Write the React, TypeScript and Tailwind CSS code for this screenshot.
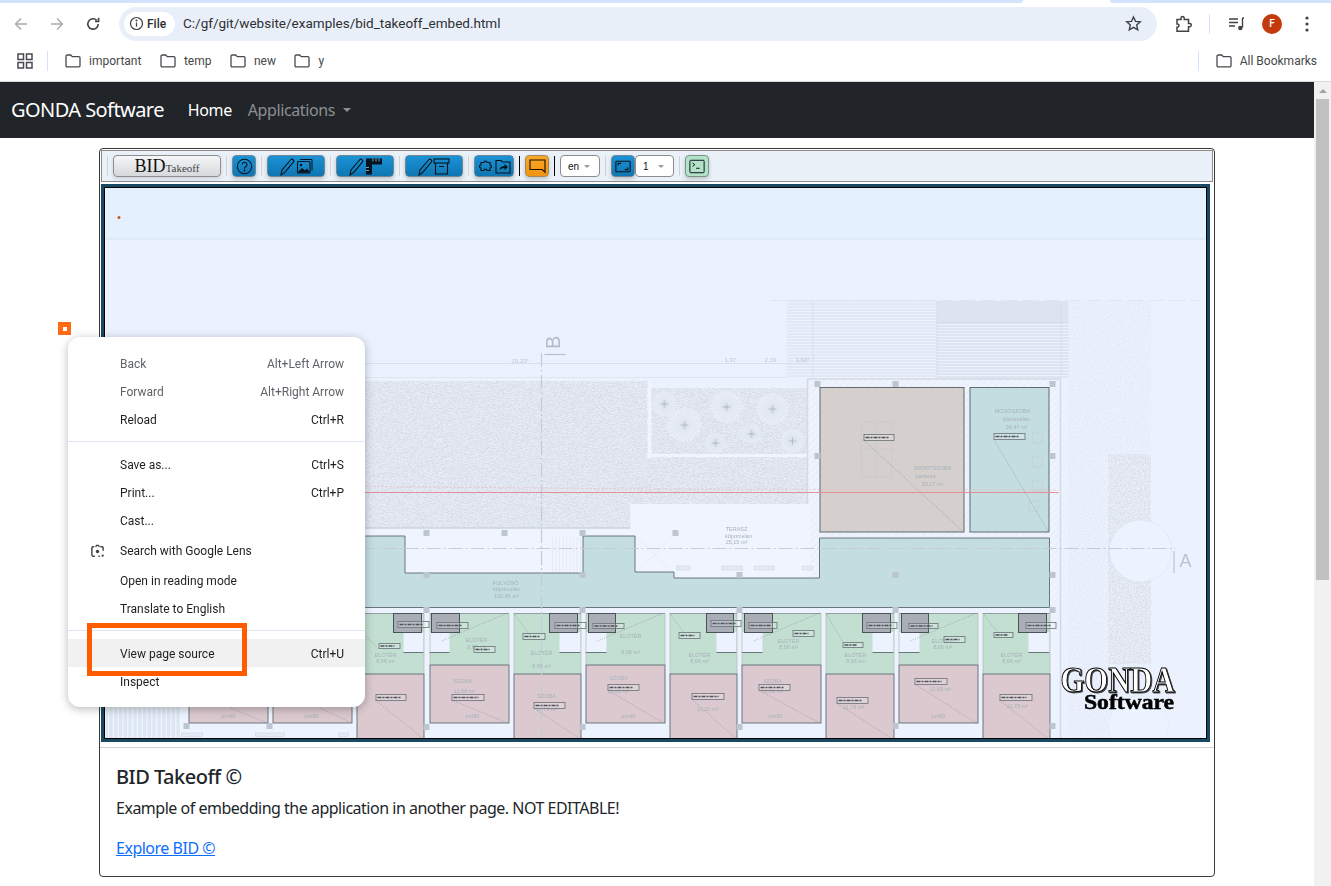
import React from "react";

const ui = { fontFamily: "Roboto, 'Liberation Sans', sans-serif" };

function Folder({ className = "" }: { className?: string }) {
  return (
    <svg viewBox="0 0 16 14" className={`w-[16px] h-[14px] ${className}`} fill="none" stroke="#474a4f" strokeWidth="1.3">
      <path d="M1 2.2c0-.6.5-1.2 1.1-1.2h3.6l1.6 1.7h6.6c.6 0 1.1.5 1.1 1.1v8c0 .6-.5 1.1-1.1 1.1H2.1c-.6 0-1.1-.5-1.1-1.1z" />
    </svg>
  );
}

function Bookmark({ label }: { label: string }) {
  return (
    <div className="flex items-center gap-[8px]">
      <Folder />
      <span className="text-[12px] text-[#474747]">{label}</span>
    </div>
  );
}

function ChromeBars() {
  return (
    <div className="bg-white border-b border-[#d8d8d8] h-[82px] flex flex-col shrink-0" style={ui}>
      <div className="h-[3px] bg-[#d3e3fd] flex">
        <div className="w-[1022px]" />
        <div className="w-[89px] bg-white rounded-t-[6px]" />
      </div>
      <div className="h-[41px] flex items-center">
        <svg viewBox="0 0 16 16" className="w-[16px] h-[16px] ml-[13px]" fill="none" stroke="#a8abaf" strokeWidth="1.5"><path d="M14 8H2.5M8 2.5 2.5 8 8 13.5" /></svg>
        <svg viewBox="0 0 16 16" className="w-[16px] h-[16px] ml-[20px]" fill="none" stroke="#a8abaf" strokeWidth="1.5"><path d="M2 8h11.5M8 2.5 13.5 8 8 13.5" /></svg>
        <svg viewBox="0 0 16 16" className="w-[16px] h-[16px] ml-[20px]" fill="none" stroke="#3f4347" strokeWidth="1.6"><path d="M13.2 8a5.2 5.2 0 1 1-1.5-3.7" /><path d="M13.6 1.8v3.6H10" /></svg>
        <div className="ml-[18px] w-[1038px] h-[34px] rounded-full bg-[#e9eff9] flex items-center pl-[5px] pr-[15px]">
          <div className="w-[51px] h-[24px] rounded-full bg-white flex items-center pl-[5px] gap-[3px]">
            <svg viewBox="0 0 16 16" className="w-[15px] h-[15px]" fill="none" stroke="#3c4043" strokeWidth="1.3"><circle cx="8" cy="8" r="6.4" /><path d="M8 7v4.4" /><circle cx="8" cy="4.8" r=".5" /></svg>
            <span className="text-[12px] font-medium text-[#2b2e31]">File</span>
          </div>
          <span className="ml-[8px] text-[13.5px] text-[#2e3033]">C:/gf/git/website/examples/bid_takeoff_embed.html</span>
          <svg viewBox="0 0 16 16" className="w-[17px] h-[17px] ml-auto" fill="none" stroke="#3f4347" strokeWidth="1.3"><path d="m8 1.8 1.9 4.2 4.5.4-3.4 3 1 4.5L8 11.6l-4 2.3 1-4.5-3.4-3 4.5-.4z" /></svg>
        </div>
        <svg viewBox="0 0 18 18" className="w-[18px] h-[18px] ml-[18px]" fill="none" stroke="#3f4347" strokeWidth="1.5"><path d="M2 4.5h4V3.2a1.6 1.6 0 0 1 3.2 0v1.3h4.3v4h1.2a1.6 1.6 0 0 1 0 3.2h-1.2v4.5H2v-4c2.6.4 2.6-3.6 0-3.2z" /></svg>
        <div className="w-px h-[20px] bg-[#d3e3fd] ml-[16px]" />
        <svg viewBox="0 0 18 18" className="w-[18px] h-[18px] ml-[17px]" fill="none" stroke="#3f4347" strokeWidth="1.4"><path d="M2 4h9M2 7.5h9M2 11h6M15.5 3v9.5" /><circle cx="13.3" cy="13" r="2.2" fill="#3f4347" stroke="none" /><path d="M15.5 3H17" /></svg>
        <div className="w-[20px] h-[20px] rounded-full bg-[#c33a0e] ml-[17px] flex items-center justify-center text-white text-[10px] font-medium">F</div>
        <svg viewBox="0 0 4 16" className="w-[4px] h-[16px] ml-[23px]" fill="#3f4347"><circle cx="2" cy="2" r="1.6" /><circle cx="2" cy="8" r="1.6" /><circle cx="2" cy="14" r="1.6" /></svg>
      </div>
      <div className="flex-1 flex items-center pb-[3px]">
        <svg viewBox="0 0 16 16" className="w-[16px] h-[16px] ml-[17px]" fill="none" stroke="#474a4f" strokeWidth="1.5"><rect x="1" y="1" width="5.5" height="5.5" /><rect x="9.5" y="1" width="5.5" height="5.5" /><rect x="1" y="9.5" width="5.5" height="5.5" /><rect x="9.5" y="9.5" width="5.5" height="5.5" /></svg>
        <div className="w-px h-[20px] bg-[#d3e3fd] ml-[14px] mr-[17px]" />
        <div className="flex gap-[18.5px]">
          <Bookmark label="important" />
          <Bookmark label="temp" />
          <Bookmark label="new" />
          <Bookmark label="y" />
        </div>
        <div className="w-px h-[20px] bg-[#d3e3fd] ml-auto mr-[17px]" />
        <div className="mr-[14px]"><Bookmark label="All Bookmarks" /></div>
      </div>
    </div>
  );
}

const btn = "h-[22px] rounded-[4px] border border-[#6f8797] bg-linear-to-b from-[#1b92d6] to-[#0e76b2] shadow-[0_2px_4px_rgba(0,0,0,0.2)] flex items-center justify-center";

function Sep({ dark }: { dark?: boolean }) {
  return <div className={dark ? "w-px h-[20px] bg-black" : "w-px h-[20px] bg-[#cfd3d8]"} />;
}

function Pencil() {
  return <path d="M2 19 3 14 12 3.5c1-1 3.5 1 2.5 2.3L5.6 16.7z" fill="none" stroke="#06121c" strokeWidth="1.1" />;
}

function Select({ label, w }: { label: string; w: string }) {
  return (
    <div className={`${w} h-[22px] rounded-[4px] border border-[#8c8c8c] bg-white flex items-center justify-between pl-[7px] pr-[9px] text-[10px] text-[#111]`} style={{ fontFamily: "'Liberation Sans', sans-serif" }}>
      <span>{label}</span>
      <span className="w-0 h-0 border-x-[3px] border-x-transparent border-t-[3px] border-t-[#999]" />
    </div>
  );
}

function Toolbar() {
  return (
    <div className="h-[32px] border border-[#8b8b8b] bg-[#ebf1f8] flex items-center gap-[5px] pl-[5px]">
      <Sep />
      <div className="w-[108px] h-[22px] rounded-[4px] border border-[#8e8e8e] bg-linear-to-b from-[#f5f6f8] to-[#d6d8db] flex items-baseline justify-center shadow-[0_2px_4px_rgba(0,0,0,0.12)] leading-[20px]" style={{ fontFamily: "'Liberation Serif', serif" }}>
        <span className="text-[18px] text-[#111]">BID</span>
        <span className="text-[11px] text-[#444]">Takeoff</span>
      </div>
      <Sep />
      <div className={`${btn} w-[24px]`}>
        <svg viewBox="0 0 18 18" className="w-[17px] h-[17px]" fill="none" stroke="#06121c" strokeWidth="1.1"><circle cx="9" cy="9" r="7.6" /><path d="M6.6 7a2.5 2.5 0 1 1 3.6 2.3c-.8.5-1.2 1-1.2 2" /><circle cx="9" cy="13.2" r=".5" /></svg>
      </div>
      <Sep />
      <div className={`${btn} w-[58px]`}>
        <svg viewBox="0 0 34 20" className="w-[34px] h-[20px]">
          <Pencil />
          <path d="M21 3.5h12v11" fill="none" stroke="#06121c" strokeWidth="1" />
          <rect x="18.5" y="5.500" width="12.500" height="11.500" rx="1" fill="none" stroke="#06121c" strokeWidth="1.1" />
          <path d="M18.500 16.500 23 12l3 2.500 2-2 3 4z" fill="#06121c" />
          <circle cx="22" cy="9" r="1.200" fill="#06121c" />
        </svg>
      </div>
      <Sep />
      <div className={`${btn} w-[58px]`}>
        <svg viewBox="0 0 34 20" className="w-[34px] h-[20px]">
          <Pencil />
          <path d="M18 2.500h16v6h-10v10h-6z" fill="#06121c" />
          <path d="M25 2.500v3M28 2.500v3M31 2.500v3M18 11.500h3M18 14.500h3" stroke="#8fc7ea" strokeWidth=".8" />
        </svg>
      </div>
      <Sep />
      <div className={`${btn} w-[58px]`}>
        <svg viewBox="0 0 34 20" className="w-[34px] h-[20px]" fill="none" stroke="#06121c" strokeWidth="1.1">
          <Pencil />
          <rect x="17" y="3" width="15" height="4" />
          <path d="M18.5 7v11h12V7M22 10.5h5" />
        </svg>
      </div>
      <Sep />
      <div className={`${btn} w-[40px]`}>
        <svg viewBox="0 0 34 18" className="w-[34px] h-[18px]" fill="none" stroke="#06121c" strokeWidth="1.1">
          <path d="M4 5.500h3a1.500 1.500 0 0 1 3 0h3v2.500a1.500 1.500 0 0 1 0 3v2.500h-3a1.500 1.500 0 0 0-3 0H4V11a1.500 1.500 0 0 1 0-3z" />
          <path d="M19 3.500h5l1.500 1.500H33v11H19z" />
          <path d="M22.500 13c.3-3 2.500-4 5-4V7l3.500 3-3.500 3v-2c-2 0-3.600.7-5 2z" fill="#06121c" stroke="none" />
        </svg>
      </div>
      <Sep dark />
      <div className="w-[24px] h-[22px] rounded-[4px] border border-[#a08a5e] bg-linear-to-b from-[#f9a825] to-[#f09410] shadow-[0_2px_4px_rgba(0,0,0,0.2)] flex items-center justify-center">
        <svg viewBox="0 0 18 16" className="w-[17px] h-[15px]" fill="none" stroke="#1a1206" strokeWidth="1.2"><path d="M1 1h16v13l-3-2.800H1z" /></svg>
      </div>
      <Sep dark />
      <Select label="en" w="w-[40px]" />
      <Sep />
      <div className="flex">
        <div className={`${btn} w-[24px]`}>
          <svg viewBox="0 0 18 14" className="w-[16px] h-[13px]" fill="none" stroke="#06121c" strokeWidth="1.2"><rect x="1" y="1" width="16" height="12" rx="1" /><path d="M3.500 6V3.500H7M14.500 8v2.500H11" /></svg>
        </div>
        <Select label="1" w="w-[39px]" />
      </div>
      <Sep />
      <div className="w-[24px] h-[22px] rounded-[4px] border border-[#7b9688] bg-[#b3e2c8] shadow-[0_2px_4px_rgba(0,0,0,0.2)] flex items-center justify-center">
        <svg viewBox="0 0 18 16" className="w-[16px] h-[15px]" fill="none" stroke="#06121c" strokeWidth="1.100"><rect x="1" y="1" width="16" height="14" rx="1" /><path d="m4 4 2.500 2L4 8M8 10h4" /></svg>
      </div>
    </div>
  );
}

type Box = [number, number, number, number];

const GREEN = "#c3dfd2";
const PINK = "#dbc9cf";
const units: { x0: number; x1: number; split: number; bottom: number; gap: [number, number] }[] = [
  { x0: 188, x1: 267, split: 664, bottom: 722, gap: [190, 210] },
  { x0: 272, x1: 351, split: 664, bottom: 722, gap: [330, 350] },
  { x0: 356, x1: 423, split: 673, bottom: 738, gap: [403, 423] },
  { x0: 429, x1: 508, split: 664, bottom: 722, gap: [429, 449] },
  { x0: 513, x1: 580, split: 673, bottom: 738, gap: [559, 580] },
  { x0: 585, x1: 664, split: 664, bottom: 722, gap: [585, 606] },
  { x0: 669, x1: 736, split: 673, bottom: 738, gap: [716, 736] },
  { x0: 741, x1: 820, split: 664, bottom: 722, gap: [741, 762] },
  { x0: 825, x1: 893, split: 673, bottom: 738, gap: [872, 893] },
  { x0: 898, x1: 977, split: 664, bottom: 722, gap: [898, 919] },
  { x0: 982, x1: 1049, split: 673, bottom: 738, gap: [1028, 1049] },
];

const wcs: [number, number][] = [[393, 421], [431, 459], [549, 577], [588, 615], [706, 733], [744, 772], [862, 890], [901, 928], [1018, 1046]];

const columns: [number, number][] = [
  [186, 725], [269, 725],
  [426, 532], [504, 532], [582, 532], [675, 532], [426, 574], [582, 574], [739, 574], [426, 609], [582, 609], [739, 609],
  [426, 726], [582, 726], [739, 726], [817, 383], [895, 383], [1052, 383], [817, 455], [1052, 455], [895, 574], [1052, 574],
  [895, 609], [1052, 609], [895, 725], [1052, 725],
];

const labels: Box[] = [
  [378, 642, 21, 5], [473, 645, 21, 6], [522, 632, 22, 6], [678, 631, 21, 6], [792, 629, 21, 6], [842, 641, 20, 5], [943, 635, 21, 6], [993, 631, 19, 5],
  [397, 620, 31, 6], [436, 621, 31, 6], [554, 621, 31, 6], [592, 622, 31, 5], [710, 619, 30, 6], [748, 621, 28, 6], [866, 621, 30, 6], [908, 622, 29, 5], [1025, 621, 30, 6],
  [375, 693, 30, 6], [451, 693, 32, 6], [533, 701, 31, 6], [607, 683, 31, 6], [691, 692, 32, 6], [758, 683, 31, 6], [836, 696, 31, 6], [914, 677, 32, 6], [999, 693, 32, 6],
  [863, 433, 30, 6], [993, 432, 31, 6],
];

const diagonals: Box[] = [
  [863, 439, 963, 531], [993, 438, 1048, 531], [451, 699, 507, 722], [607, 689, 663, 722], [758, 689, 819, 722], [914, 683, 976, 722],
  [375, 699, 423, 738], [533, 707, 580, 738], [691, 698, 736, 738], [836, 702, 892, 738], [999, 699, 1048, 738],
  [441, 640, 507, 612], [597, 640, 663, 612], [753, 640, 819, 612], [910, 640, 976, 612], [360, 630, 378, 648], [513, 612, 530, 635], [669, 612, 686, 635], [825, 612, 842, 640], [982, 612, 1000, 635],
  [230, 707, 267, 722], [320, 707, 351, 722],
];

const planText: [number, number, string][] = [
  [932, 469, "SPORTSZOBA"], [925, 477, "parketta"], [932, 485, "53,17 m²"],
  [1012, 412, "MOSÓSZOBA"], [1016, 420, "kőporcelán"], [1016, 428, "39,47 m²"],
  [505, 584, "FOLYOSÓ"], [506, 590, "kőporcelán"], [506, 597, "100,45 m²"],
  [736, 530, "TERASZ"], [738, 537, "kőporcelán"], [736, 543, "25,15 m²"],
  [385, 656, "ELŐTÉR"], [385, 662, "8,66 m²"], [476, 641, "ELŐTÉR"], [476, 648, "8,66 m²"], [541, 654, "ELŐTÉR"], [541, 667, "8,66 m²"],
  [630, 637, "ELŐTÉR"], [630, 653, "8,66 m²"], [699, 656, "ELŐTÉR"], [699, 662, "8,66 m²"], [788, 642, "ELŐTÉR"], [788, 648, "8,66 m²"],
  [855, 656, "ELŐTÉR"], [855, 662, "8,66 m²"], [942, 642, "ELŐTÉR"], [942, 648, "8,66 m²"], [1011, 656, "ELŐTÉR"], [1011, 662, "8,66 m²"],
  [462, 682, "SZOBA"], [464, 692, "11,68 m²"], [546, 697, "SZOBA"], [546, 710, "11,79 m²"], [618, 679, "SZOBA"], [618, 692, "11,68 m²"],
  [707, 710, "10,20 m²"], [772, 682, "SZOBA"], [772, 692, "11,68 m²"], [940, 690, "11,68 m²"], [853, 708, "11,79 m²"], [1017, 707, "11,79 m²"],
  [472, 717, "pm90"], [628, 717, "pm90"], [775, 717, "pm90"], [938, 717, "pm90"], [228, 717, "pm90"], [311, 717, "pm90"],
];

const trees: [number, number, number][] = [[664, 403, 12], [726, 406, 16], [772, 408, 16], [684, 424, 17], [715, 442, 10], [751, 433, 10], [792, 440, 12]];

function FloorPlan() {
  return (
    <svg viewBox="105 187 1100 550" className="w-full h-full block">
      <defs>
        <filter id="stipple" x="0" y="0" width="100%" height="100%" colorInterpolationFilters="sRGB">
          <feTurbulence type="fractalNoise" baseFrequency="0.8" numOctaves="2" seed="3" />
          <feColorMatrix type="matrix" values="0 0 0 0 0.5  0 0 0 0 0.56  0 0 0 0 0.66  5 0 0 0 -2.2" />
        </filter>
        <pattern id="hatch" width="5" height="5" patternUnits="userSpaceOnUse" patternTransform="rotate(-45)">
          <path d="M0 0H5" stroke="#d9e1ee" strokeWidth=".8" />
        </pattern>
      </defs>
      <rect x="105" y="187" width="1100" height="550" fill="#ebf2fe" />
      <rect x="105" y="187" width="1100" height="51" fill="#e4f0fe" />
      <path d="M105 238H1205" stroke="#d6e0ee" />
      <circle cx="118.500" cy="216.500" r="1.500" fill="#c8571b" />

      <g className="blur-[0.4px]">
        {/* ground */}
        <rect x="105" y="380" width="542" height="147" fill="#e7ecf5" />
        <rect x="105" y="380" width="542" height="147" filter="url(#stipple)" opacity=".18" />
        <rect x="647" y="453" width="165" height="50" fill="#e7ecf5" />
        <rect x="647" y="453" width="165" height="50" filter="url(#stipple)" opacity=".18" />
        <rect x="630" y="503" width="180" height="30" fill="#eff4fe" />
        <rect x="647" y="380" width="4" height="77" fill="#eff4fe" />
        <rect x="647" y="453" width="165" height="3" fill="#eff4fe" />
        <rect x="651" y="387" width="156" height="66" fill="#e7ecf5" />
        <rect x="651" y="387" width="156" height="66" filter="url(#stipple)" opacity=".18" />
        {trees.map(([x, y, r], i) => (
          <g key={i} stroke="#ccd4e0" strokeWidth=".3" fill="#e8edf6">
            <circle cx={x} cy={y} r={r} stroke="none" />
            {[0, 15, 30, 45, 60, 75, 90, 105, 120, 135, 150, 165].map((a) => (
              <path key={a} d={`M${x - r} ${y}H${x + r}`} transform={`rotate(${a} ${x} ${y})`} />
            ))}
            <path d={`M${x - 4} ${y}H${x + 4}M${x} ${y - 4}V${y + 4}`} stroke="#a8b2c0" strokeWidth=".7" />
          </g>
        ))}
        <rect x="1068" y="300" width="82" height="437" fill="#ebf1fd" />
        <rect x="1068" y="300" width="82" height="437" filter="url(#stipple)" opacity=".06" />
        <rect x="1108" y="453" width="42" height="210" fill="#e8edf6" />
        <rect x="1108" y="453" width="42" height="210" filter="url(#stipple)" opacity=".14" />
        <circle cx="1140" cy="550" r="31" fill="#ecf2fe" stroke="#d8dfea" strokeDasharray="1 1" />
        <circle cx="1138" cy="725" r="30" fill="#ecf2fe" stroke="#dfe6f1" strokeDasharray="1 1" />

        {/* striped deck */}
        <rect x="936" y="300" width="132" height="22" fill="#dde3ef" />
        <g stroke="#d2dae7" strokeWidth=".8">
          {Array.from({ length: 26 }, (_, i) => (
            <path key={i} d={`M786 ${300 + i * 3}H936`} />
          ))}
        </g>
        <g stroke="#c8d0de" strokeWidth=".8">
          {Array.from({ length: 19 }, (_, i) => (
            <path key={i} d={`M936 ${322 + i * 3}H1068`} />
          ))}
        </g>
        <path d="M812.500 300V376M936.500 300V376M1060.500 300V376" stroke="#d8dfeb" />
        <path d="M105 362.500H810" stroke="#d8e0ec" />
        <path d="M105 376.500H786" stroke="#dde5f0" />
        <path d="M770 299.500H1200" stroke="#e0e7f3" strokeDasharray="16 5" />
        <g fill="#a9b2bf" fontSize="6" fontFamily="'Liberation Sans', sans-serif" opacity=".7">
          <text x="511" y="362">19,33⁵</text>
          <text x="724" y="361">1,97</text>
          <text x="764" y="361">2,19</text>
          <text x="795" y="361">1,60⁵</text>
        </g>

        {/* building shell */}
        <rect x="807" y="378" width="253" height="360" fill="#eef3fe" />
        <rect x="807" y="378" width="253" height="360" fill="url(#hatch)" />
        <rect x="180" y="527" width="505" height="60" fill="#eff4fe" stroke="#ccd4df" strokeWidth="1.500" />
        <rect x="630" y="503" width="180" height="74" fill="#eff4fe" />
        <rect x="180" y="606" width="880" height="132" fill="#edf3fe" />
        <path d="M807 378H1060V738M807 378V503" fill="none" stroke="#d3dae5" strokeWidth="1.500" />
        <g stroke="#dce3ed" strokeWidth=".5">
          {Array.from({ length: 9 }, (_, i) => (
            <path key={i} d={`M${552 + i * 3.500} 536v35`} />
          ))}
          <path d="M638 537l32 33M670 537l-32 33" fill="none" />
        </g>
        <g fill="#e4eaf3" stroke="#cdd5df" strokeWidth=".6">
          {[[676, 565, 14], [721, 565, 21], [754, 565, 20], [802, 565, 10]].map(([x, y, w], i) => (
            <rect key={i} x={x} y={y} width={w} height="4" />
          ))}
        </g>
        {/* strip left of the rooms, under the menu and beneath it */}
        <rect x="105" y="606" width="75" height="131" fill="#dde7f3" />
        <g stroke="#f1f6fd" strokeWidth="1.200">
          {Array.from({ length: 16 }, (_, i) => (
            <path key={i} d={`M${108 + i * 4.800} 606V737`} />
          ))}
        </g>
        <g fill="#e4eaf3" stroke="#cdd5df" strokeWidth=".6">
          {[[181, 732, 21], [255, 732, 29], [338, 732, 10]].map(([x, y, w], i) => (
            <rect key={i} x={x} y={y} width={w} height="3.500" />
          ))}
        </g>

        {/* corridor */}
        <path d="M180 535H404.500V572H582.500V535H634.500V571H673.500V577H819V537H1049V606.500H180Z" fill="#c3dde1" stroke="#5f6a72" strokeWidth=".9" />
        <rect x="819.500" y="386.500" width="144" height="144.500" fill="#d5cfce" stroke="#5f6a72" />
        <rect x="969.500" y="386.500" width="79" height="144.500" fill="#c4dde0" stroke="#5f6a72" />
        <g stroke="#c0c6ce" strokeWidth=".5" fill="none">
          <path d="M861 421h30v55h-30zM876 421v55M859 448h36" />
          <path d="M1032 432h10v10h-10zM1032 456h10v10h-10zM1032 480h10v10h-10zM1028 500h10v10h-10z" />
        </g>

        {/* units */}
        {units.map((u) => (
          <g key={u.x0} stroke="#5f6a72" strokeWidth=".9">
            <rect x={u.x0 + 0.5} y={612.500} width={u.x1 - u.x0} height={u.split - 612.500} fill={GREEN} stroke="none" />
            <rect x={u.gap[0]} y={631} width={u.gap[1] - u.gap[0]} height={20} fill="#ecf2fe" stroke="none" />
            <path d={`M${u.x0 + 0.5} 612.500H${u.x1 + 0.5}`} stroke="#8a969a" />
            <rect x={u.x0 + 0.5} y={u.split} width={u.x1 - u.x0} height={u.bottom - u.split} fill={PINK} />
            <path d={`M${u.gap[0]} 651.500H${u.gap[1]}`} />
            <path d={`M${u.x0 + 0.5} 612.500V${u.split}M${u.x1 + 0.5} 612.500V${u.split}`} stroke="#a4b4ad" strokeWidth=".6" />
          </g>
        ))}
        {wcs.map(([a, b]) => (
          <rect key={a} x={a} y={612.500} width={b - a} height={19} fill="#a9adb5" stroke="#4c525a" />
        ))}
        {columns.map(([x, y], i) => (
          <rect key={i} x={x - 3} y={y - 3} width="6" height="6" fill="#bcc5d0" />
        ))}

        {/* dash lines */}
        <g fill="none" stroke="#c4ccd7" strokeWidth="1.200" strokeDasharray="14 3 2 3">
          <path d="M360 547.500H1175" />
          <path d="M541 352V738" />
        </g>
        <path d="M105 491.500H1058" stroke="#e58f98" strokeWidth="1.200" />
        <path d="M105 483 L640 488L1058 489" fill="none" stroke="#efb8bd" strokeWidth=".8" strokeDasharray="2 2" />
        <path d="M544 353.500H565" stroke="#b8bfca" strokeWidth="1.200" />
        <text x="559" y="348" fontSize="20" fill="#b5bcc7" fontFamily="'Liberation Sans', sans-serif" transform="rotate(-90 559 348)">B</text>
        <path d="M1173.500 550V572" stroke="#bcc3cd" strokeWidth="1.200" />
        <text x="1179" y="566" fontSize="18" fill="#bcc3cd" fontFamily="'Liberation Sans', sans-serif">A</text>

        <g stroke="#7d858d" strokeWidth=".5" strokeDasharray="1.200 1.200" fill="none">
          {diagonals.map(([a, b, c, d], i) => (
            <path key={i} d={`M${a} ${b}L${c} ${d}`} />
          ))}
        </g>
        <g fill="#a6b2b8" fontSize="5.500" fontFamily="'Liberation Sans', sans-serif" textAnchor="middle">
          {planText.map(([x, y, t], i) => (
            <text key={i} x={x} y={y}>{t}</text>
          ))}
        </g>
        {labels.map(([x, y, w, h], i) => (
          <g key={i}>
            <rect x={x + 0.5} y={y + 0.5} width={w} height={h} fill="#eef2f4" fillOpacity=".25" stroke="#6a7076" strokeWidth=".8" />
            <path d={`M${x + 2} ${y + h / 2 + 0.5}H${x + w - 5}`} stroke="#4e5359" strokeWidth="1.700" strokeDasharray="4 1 2 1" />
          </g>
        ))}
      </g>
      <text x="1117" y="691" textAnchor="middle" fontSize="35" fontWeight="700" fontFamily="'Liberation Serif', serif" fill="#fff" stroke="#000" strokeWidth="1" textLength="114" lengthAdjust="spacingAndGlyphs" className="drop-shadow-[1px_1px_0_rgba(0,0,0,0.7)]">GONDA</text>
      <text x="1128.500" y="708" textAnchor="middle" fontSize="20" fontWeight="700" fontFamily="'Liberation Serif', serif" fill="#000" stroke="#000" strokeWidth=".5" textLength="90" lengthAdjust="spacingAndGlyphs">Software</text>
    </svg>
  );
}

function MenuRow({ label, keys, dim, hover, lens, tall, low }: { label: string; keys?: string; dim?: boolean; hover?: boolean; lens?: boolean; tall?: boolean; low?: boolean }) {
  return (
    <div className={`flex items-center pl-[22px] pr-[21px] ${tall ? "h-[30px]" : "h-[28px]"} ${low ? "pt-[2px]" : ""} ${hover ? "bg-[#f1f1f1]" : ""}`}>
      <div className="w-[30px] shrink-0">
        {lens && (
          <svg viewBox="0 0 16 16" className="w-[15px] h-[15px]" fill="none" stroke="#3c4043" strokeWidth="1.500">
            <path d="M4.500 3H3.200C2.500 3 2 3.500 2 4.200v7.600c0 .7.500 1.200 1.200 1.200h2M10.500 13H9M11 3h1.800c.7 0 1.200.5 1.200 1.200v3M6 3l1-1.500h2L10 3" />
            <circle cx="8" cy="8" r="1.800" fill="#3c4043" stroke="none" />
            <circle cx="13.500" cy="12.500" r="1.200" fill="#3c4043" stroke="none" />
          </svg>
        )}
      </div>
      <span className={`text-[12px] ${dim ? "text-[#5f6368]" : "text-[#1f1f1f]"}`}>{label}</span>
      {keys && <span className={`ml-auto text-[12px] ${dim ? "text-[#5f6368]" : "text-[#1f1f1f]"}`}>{keys}</span>}
    </div>
  );
}

function ContextMenu() {
  return (
    <div className="absolute left-[68px] top-[255px] w-[297px] h-[370px] rounded-[12px] bg-white shadow-[0_2px_10px_rgba(0,0,0,0.28)] pt-[13px] z-10" style={ui}>
      <MenuRow label="Back" keys="Alt+Left Arrow" dim />
      <MenuRow label="Forward" keys="Alt+Right Arrow" dim />
      <MenuRow label="Reload" keys="Ctrl+R" />
      <div className="h-px bg-[#dfe6f3] my-[7px]" />
      <div className="h-[2px]" />
      <MenuRow label="Save as..." keys="Ctrl+S" />
      <MenuRow label="Print..." keys="Ctrl+P" />
      <MenuRow label="Cast..." />
      <div className="h-px" />
      <MenuRow label="Search with Google Lens" lens tall />
      <div className="h-px" />
      <MenuRow label="Open in reading mode" />
      <MenuRow label="Translate to English" />
      <div className="h-px bg-[#dfe6f3] my-[7px]" />
      <div className="h-px" />
      <MenuRow label="View page source" keys="Ctrl+U" hover low />
      <MenuRow label="Inspect" low />
    </div>
  );
}

function Scrollbar() {
  return (
    <div className="w-[17px] shrink-0 bg-[#f1f1f1] flex flex-col items-center">
      <div className="h-[17px] flex items-center justify-center">
        <span className="w-0 h-0 border-x-[4px] border-x-transparent border-b-[4px] border-b-[#a3a3a3]" />
      </div>
      <div className="w-[13px] h-[481px] bg-[#c1c1c1]" />
    </div>
  );
}

export default function App() {
  return (
    <div className="w-[1331px] h-[886px] overflow-hidden flex flex-col bg-white">
      <ChromeBars />
      <div className="flex-1 flex min-h-0">
        <div className="flex-1 relative min-w-0" style={{ fontFamily: "'Noto Sans', sans-serif" }}>
          <div className="h-[56px] bg-[#212529] flex items-center pl-[11px]">
            <span className="text-[20px] text-white tracking-[-0.57px]">GONDA Software</span>
            <span className="text-[16px] text-white ml-[24px] tracking-[-0.4px]">Home</span>
            <span className="text-[16px] text-[#8c8f92] ml-[16px] tracking-[-0.4px]">Applications</span>
            <span className="ml-[8px] w-0 h-0 border-x-[4px] border-x-transparent border-t-[4px] border-t-[#8c8f92]" />
          </div>
          <div className="ml-[99px] mt-[10px] w-[1116px] h-[729px] border border-[#3a3a3a] rounded-[4px] overflow-hidden bg-white">
            <div className="px-[1px] pt-[1px]">
              <Toolbar />
              <div className="mt-[2px] h-[558px] border-[3px] border-[#1a4a63] mr-[3px]">
                <div className="w-full h-full border border-black">
                  <FloorPlan />
                </div>
              </div>
            </div>
            <div className="mt-[5px] border-t border-[#d4d4d4] pl-[16px] pt-[17px] text-[#212529]">
              <h5 className="text-[20px] font-medium leading-[24px] tracking-[-0.5px]">BID Takeoff ©</h5>
              <p className="text-[16px] leading-[24px] mt-[7px] tracking-[-0.49px]">Example of embedding the application in another page. NOT EDITABLE!</p>
              <a className="block text-[16px] leading-[24px] mt-[16px] text-[#0d6efd] underline tracking-[-0.49px]">Explore BID ©</a>
            </div>
          </div>
          <div className="absolute left-[58px] top-[240px] w-[13px] h-[13px] bg-[#ff6a13] flex items-center justify-center">
            <div className="w-[4px] h-[4px] bg-white" />
          </div>
          <ContextMenu />
          <div className="absolute left-[87px] top-[541px] w-[160px] h-[53px] border-[5px] border-[#ff5c00] z-20" />
        </div>
        <Scrollbar />
      </div>
    </div>
  );
}
